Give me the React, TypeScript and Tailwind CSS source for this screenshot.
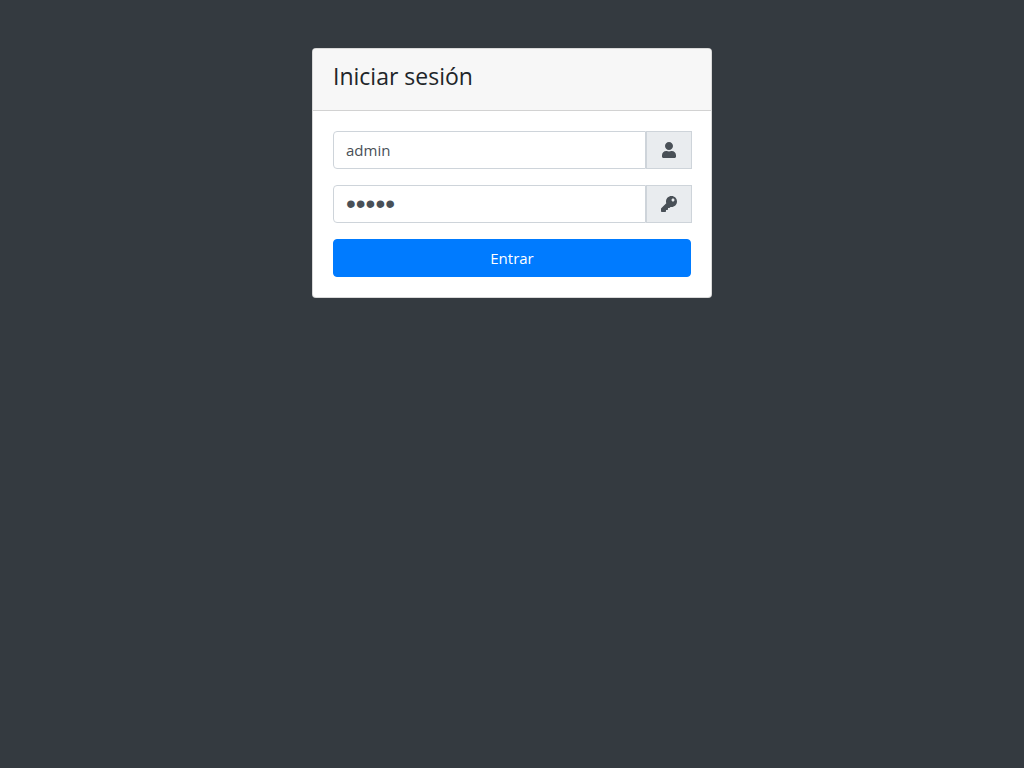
import { FaKey, FaUser } from "react-icons/fa";
import type { ReactNode } from "react";
import { clsx } from "clsx";

type FieldProps = {
    id: string;
    label: string;
    type: "text" | "password";
    value: string;
    icon: ReactNode;
};

function Field({ id, label, type, value, icon }: FieldProps) {
    return (
        <div className="flex mb-4 -mr-px">
            <input
                id={id}
                name={id}
                type={type}
                aria-label={label}
                defaultValue={value}
                className={clsx(
                    "min-w-0 flex-1 h-[38px] px-3 leading-6 text-[#495057] bg-white border border-[#ced4da] rounded-l focus:outline-none focus:border-[#80bdff]",
                    // larger size so the password bullets are easy to see
                    type === "password" ? "font-['Liberation_Sans',sans-serif] text-[28px]" : "text-[15px]"
                )}
            />
            <label
                htmlFor={id}
                aria-label={label}
                className="flex items-center justify-center w-[46px] text-base text-[#495057] bg-[#e9ecef] border border-[#ced4da]"
            >
                {icon}
            </label>
        </div>
    );
}

export default function App() {
    return (
        <main className="min-h-screen px-4 py-12 bg-[#343a40] font-['Open_Sans',sans-serif] text-[#212529]">
            <div className="w-full max-w-[400px] mx-auto bg-white border border-black/15 rounded overflow-hidden">
                {/* Header */}
                <div className="px-5 pt-[13px] pb-[19px] bg-[#f7f7f7] border-b border-black/15">
                    <h1 className="text-[23px] leading-[29px]">Iniciar sesión</h1>
                </div>

                {/* Login form */}
                <form className="p-5" onSubmit={(e) => e.preventDefault()}>
                    <Field id="username" label="Usuario" type="text" value="admin" icon={<FaUser />} />
                    <Field id="password" label="Contraseña" type="password" value="admin" icon={<FaKey />} />
                    <button
                        type="submit"
                        className="block w-full h-[38px] px-3 text-[15px] leading-6 text-white bg-[#007bff] border border-[#007bff] rounded cursor-pointer hover:bg-[#0069d9]"
                    >
                        Entrar
                    </button>
                </form>
            </div>
        </main>
    );
}
